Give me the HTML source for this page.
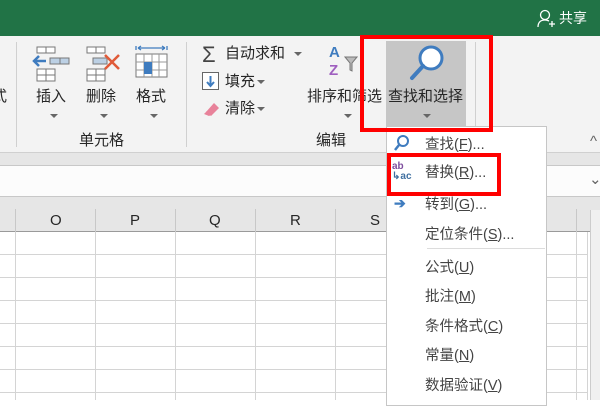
<!DOCTYPE html><html><head><meta charset="utf-8"><style>
*{margin:0;padding:0;box-sizing:border-box}
body{width:600px;height:400px;overflow:hidden;position:relative;background:#fff;font-family:"Liberation Sans","Noto Sans CJK SC",sans-serif;color:#262626}
.a{position:absolute}
.t{position:absolute;font-size:15px;white-space:nowrap;line-height:16px}
.m{position:absolute;left:425px;font-size:14.5px;color:#444;white-space:nowrap;line-height:16px}
.m u{text-decoration:underline}
.arr{position:absolute;width:0;height:0;border-left:4px solid transparent;border-right:4px solid transparent;border-top:4px solid #666}
</style></head><body>
<div class="a" style="left:0;top:0;width:600px;height:36px;background:#217346"></div>
<svg class="a" style="left:537px;top:9px" width="18" height="20"><circle cx="8" cy="6" r="4.5" fill="none" stroke="#fff" stroke-width="1.3"/><path d="M1 18c0-5 3-7 7-7 2 0 3 .5 4 1M12 15h6M15 12v6" fill="none" stroke="#fff" stroke-width="1.3"/></svg>
<div class="t" style="left:559px;top:10px;color:#fff;font-size:14px">共享</div>
<div class="a" style="left:0;top:36px;width:600px;height:116px;background:#f3f3f3"></div>
<div class="a" style="left:16px;top:42px;width:1px;height:105px;background:#d0d0d0"></div>
<div class="a" style="left:186px;top:42px;width:1px;height:105px;background:#d0d0d0"></div>
<div class="a" style="left:475px;top:42px;width:1px;height:105px;background:#d0d0d0"></div>
<div class="t" style="left:-8px;top:89px">式</div>
<svg class="a" style="left:32px;top:46px" width="40" height="36"><g fill="#fff" stroke="#777"><rect x="5" y="1" width="18" height="6"/><rect x="18" y="12" width="19" height="6" fill="#bcd0e4"/><rect x="5" y="23" width="18" height="12"/></g><path d="M14 1v6M14 23v12M5 29h18M28 12v6" stroke="#777"/><path d="M2 15h12M7 10l-5 5 5 5" stroke="#3f7cbf" stroke-width="2.5" fill="none"/></svg>
<svg class="a" style="left:85px;top:46px" width="40" height="36"><g fill="#fff" stroke="#777"><rect x="2" y="1" width="18" height="6"/><rect x="8" y="12" width="14" height="6" fill="#bcd0e4"/><rect x="2" y="23" width="18" height="12"/></g><path d="M11 1v6M11 23v12M2 29h18" stroke="#777"/><path d="M20 9l14 14M34 9L20 23" stroke="#e05a38" stroke-width="2.5"/></svg>
<svg class="a" style="left:134px;top:44px" width="36" height="40"><path d="M2 2v4M33 2v4M4 4h27M4 4l3-2M4 4l3 2M31 4l-3-2M31 4l-3 2" stroke="#3f7cbf" stroke-width="1.3" fill="none"/><rect x="2" y="10" width="31" height="23" fill="#fff" stroke="#777"/><path d="M2 18h31M2 26h31M10 10v23M18 10v23M25 10v23" stroke="#999"/><rect x="10" y="18" width="8" height="12" fill="#3f7cbf"/></svg>
<div class="t" style="left:36px;top:89px">插入</div>
<div class="t" style="left:86px;top:89px">删除</div>
<div class="t" style="left:136px;top:89px">格式</div>
<div class="arr" style="left:50px;top:114px"></div>
<div class="arr" style="left:100px;top:114px"></div>
<div class="arr" style="left:150px;top:114px"></div>
<div class="t" style="left:79px;top:133px">单元格</div>
<div class="t" style="left:202px;top:44px;font-size:22px;line-height:22px;color:#444">Σ</div>
<div class="t" style="left:225px;top:46px">自动求和</div>
<div class="arr" style="left:294px;top:52px"></div>
<svg class="a" style="left:202px;top:72px" width="17" height="18"><rect x=".5" y=".5" width="16" height="17" fill="#fff" stroke="#666"/><path d="M8.5 4v10M5 10l3.5 4 3.5-4" stroke="#3f7cbf" stroke-width="2" fill="none"/></svg>
<div class="t" style="left:225px;top:74px">填充</div>
<div class="arr" style="left:257px;top:80px"></div>
<svg class="a" style="left:203px;top:100px" width="17" height="17"><path d="M3 12l8-9 5 5-8 8z" fill="#e8829a"/><path d="M1 14l3-3 4 4-2 1z" fill="#e8829a"/></svg>
<div class="t" style="left:225px;top:101px">清除</div>
<div class="arr" style="left:257px;top:107px"></div>
<div class="t" style="left:329px;top:45px;font-size:15px;color:#3f7cbf;font-weight:bold">A</div>
<div class="t" style="left:329px;top:63px;font-size:15px;color:#9f5fbf;font-weight:bold">Z</div>
<svg class="a" style="left:344px;top:56px" width="14" height="16"><path d="M1 1h12l-5 6v8l-2-1V7z" fill="#bbb" stroke="#777"/></svg>
<div class="t" style="left:307px;top:89px">排序和筛选</div>
<div class="arr" style="left:344px;top:114px"></div>
<div class="t" style="left:316px;top:133px">编辑</div>
<div class="a" style="left:386px;top:41px;width:80px;height:86px;background:#c6c6c6"></div>
<svg class="a" style="left:406px;top:42px" width="40" height="42"><circle cx="25" cy="16" r="11" fill="#fff" stroke="#3f7cbf" stroke-width="3"/><path d="M17 24L6 36" stroke="#3f7cbf" stroke-width="4" stroke-linecap="round"/></svg>
<div class="t" style="left:388px;top:89px">查找和选择</div>
<div class="arr" style="left:423px;top:114px"></div>
<div class="t" style="left:590px;top:134px;color:#666">^</div>
<div class="a" style="left:0;top:152px;width:600px;height:13px;background:#e6e6e6;border-top:1px solid #d0d0d0"></div>
<div class="a" style="left:0;top:165px;width:600px;height:32px;background:#fcfcfc;border-top:1px solid #c8c8c8;border-bottom:1px solid #c8c8c8"></div>
<div class="t" style="left:589px;top:172px;color:#666">⌄</div>
<div class="a" style="left:0;top:197px;width:600px;height:35px;background:#e6e6e6;border-bottom:1px solid #9a9a9a"></div>
<svg class="a" style="left:0;top:197px" width="600" height="203">
<g stroke="#c8c8c8"><path d="M15.5 12v23M95.5 12v23M175.5 12v23M255.5 12v23M335.5 12v23M576.5 12v23"/></g>
<g stroke="#d4d4d4"><path d="M15.5 35v170M95.5 35v170M175.5 35v170M255.5 35v170M335.5 35v170M415.5 35v170M576.5 35v170M587.5 35v170"/>
<path d="M0 57.5h588M0 80.5h588M0 103.5h588M0 126.5h588M0 149.5h588M0 172.5h588M0 195.5h588"/></g>
</svg>
<div class="a" style="left:590px;top:210px;width:10px;height:190px;background:#f0f0f0;border-left:1px solid #ccc"></div>
<div class="t" style="left:50px;top:213px;font-size:15px">O</div>
<div class="t" style="left:130px;top:213px;font-size:15px">P</div>
<div class="t" style="left:209px;top:213px;font-size:15px">Q</div>
<div class="t" style="left:290px;top:213px;font-size:15px">R</div>
<div class="t" style="left:370px;top:213px;font-size:15px">S</div>
<div class="a" style="left:386px;top:126px;width:161px;height:280px;background:#fff;border:1px solid #c6c6c6"></div>
<svg class="a" style="left:393px;top:134px" width="18" height="18"><circle cx="10" cy="7" r="5" fill="none" stroke="#3f7cbf" stroke-width="2"/><path d="M6 11l-4 5" stroke="#3f7cbf" stroke-width="2.5"/></svg>
<div class="m" style="top:137px">查找(<u>F</u>)...</div>
<div class="a" style="left:392px;top:162px;font-size:10px;line-height:10px;color:#7e4e9e;font-weight:bold">ab</div>
<div class="a" style="left:392px;top:172px;font-size:10px;line-height:10px;color:#3f6fa0;font-weight:bold">↳ac</div>
<div class="m" style="top:165px">替换(<u>R</u>)...</div>
<div class="a" style="left:394px;top:195px;font-size:14px;color:#3f7cbf;font-weight:bold">➔</div>
<div class="m" style="top:197px">转到(<u>G</u>)...</div>
<div class="m" style="top:227px">定位条件(<u>S</u>)...</div>
<div class="a" style="left:427px;top:248px;width:118px;height:1px;background:#dcdcdc"></div>
<div class="m" style="top:260px">公式(<u>U</u>)</div>
<div class="m" style="top:289px">批注(<u>M</u>)</div>
<div class="m" style="top:319px">条件格式(<u>C</u>)</div>
<div class="m" style="top:348px">常量(<u>N</u>)</div>
<div class="m" style="top:378px">数据验证(<u>V</u>)</div>
<div class="a" style="left:360px;top:35px;width:133px;height:97px;border:4px solid #f00"></div>
<div class="a" style="left:387px;top:153px;width:114px;height:43px;border:4px solid #f00"></div>
</body></html>
